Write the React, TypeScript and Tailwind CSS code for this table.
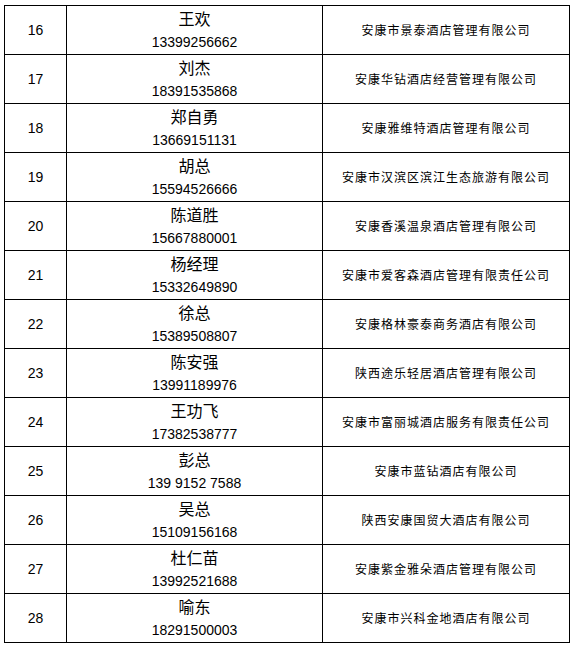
import React from "react";

const rows: [string, string, string, string][] = [
  ["16", "王欢", "13399256662", "安康市景泰酒店管理有限公司"],
  ["17", "刘杰", "18391535868", "安康华钻酒店经营管理有限公司"],
  ["18", "郑自勇", "13669151131", "安康雅维特酒店管理有限公司"],
  ["19", "胡总", "15594526666", "安康市汉滨区滨江生态旅游有限公司"],
  ["20", "陈道胜", "15667880001", "安康香溪温泉酒店管理有限公司"],
  ["21", "杨经理", "15332649890", "安康市爱客森酒店管理有限责任公司"],
  ["22", "徐总", "15389508807", "安康格林豪泰商务酒店有限公司"],
  ["23", "陈安强", "13991189976", "陕西途乐轻居酒店管理有限公司"],
  ["24", "王功飞", "17382538777", "安康市富丽城酒店服务有限责任公司"],
  ["25", "彭总", "139 9152 7588", "安康市蓝钻酒店有限公司"],
  ["26", "吴总", "15109156168", "陕西安康国贸大酒店有限公司"],
  ["27", "杜仁苗", "13992521688", "安康紫金雅朵酒店管理有限公司"],
  ["28", "喻东", "18291500003", "安康市兴科金地酒店有限公司"],
];

export default function App() {
  return (
    <div className="w-[577px] h-[657px] bg-white pt-[5px] pl-[4px] text-black [font-family:'Liberation_Sans','Noto_Sans_CJK_SC',sans-serif]">
      <div className="w-[566px] border-r border-b border-black">
        {rows.map(([n, name, phone, company]) => (
          <div key={n} className="flex h-[49px] border-t border-black">
            <div className="w-[62px] border-l border-black flex items-center justify-center text-[14px]">
              {n}
            </div>
            <div className="w-[256px] border-l border-black flex flex-col items-center">
              <div className="h-[24px] leading-[24px] text-[16px] [font-family:'Noto_Sans_CJK_SC',sans-serif]">
                {name}
              </div>
              <div className="h-[24px] leading-[24px] text-[14px] whitespace-pre">
                {phone}
              </div>
            </div>
            <div className="w-[247px] border-l border-black flex items-center justify-center text-[12px] tracking-[1px] [font-family:'Noto_Sans_CJK_SC',sans-serif]">
              {company}
            </div>
          </div>
        ))}
      </div>
    </div>
  );
}
